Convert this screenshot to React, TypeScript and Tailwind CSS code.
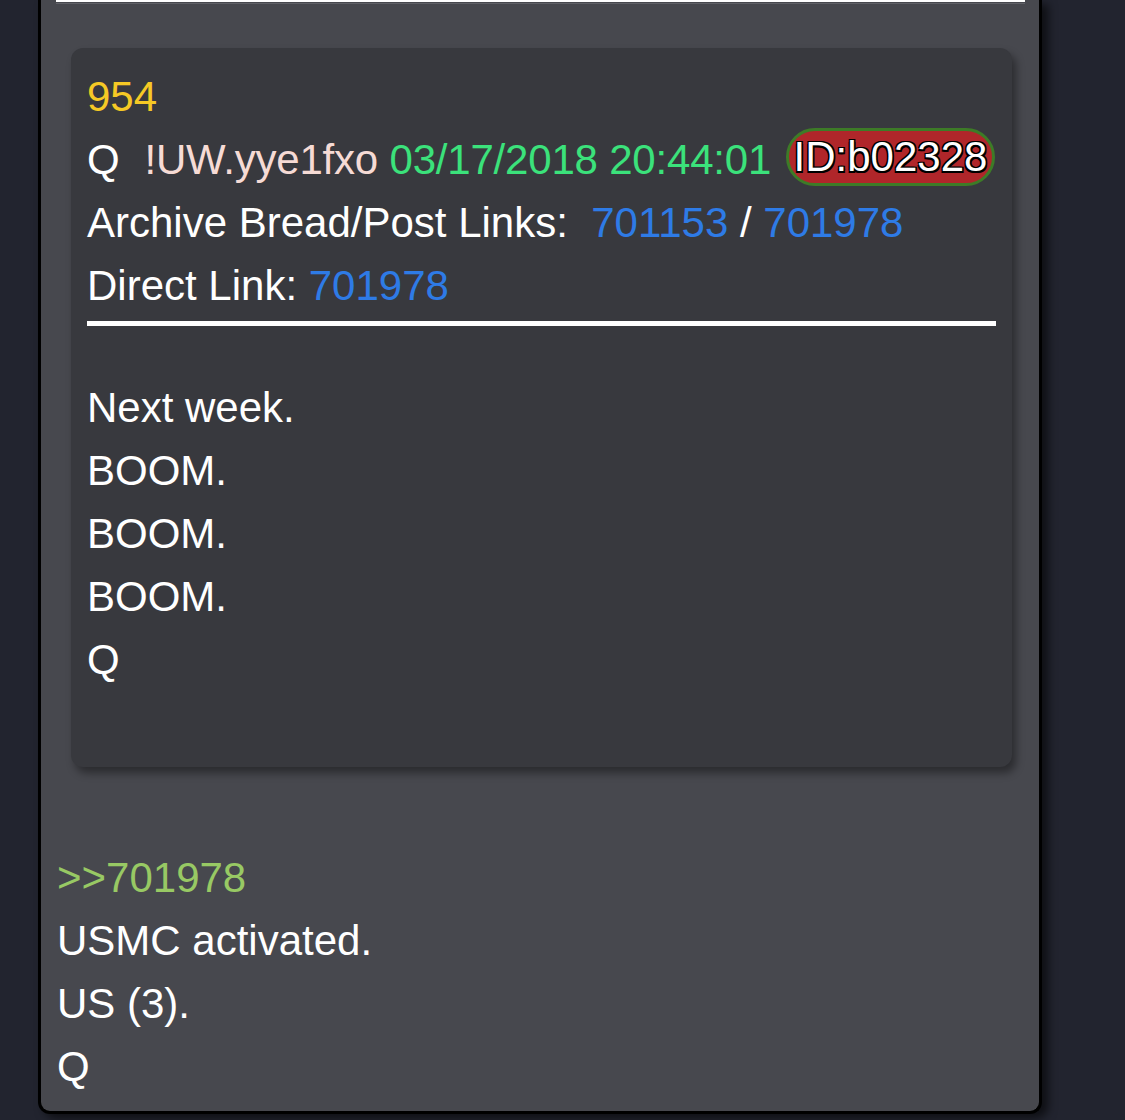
import React from 'react';

const font = "font-['Liberation_Sans',Arial,sans-serif]";

const Badge: React.FC<{ id: string }> = ({ id }) => (
    <span className="relative -top-[3px] inline-block align-middle -mt-[6px] ml-[3px] rounded-full border-[3px] border-[#3d7b27] bg-[#b0262a] px-[5px] leading-[52px] tracking-normal text-white [text-shadow:-1.5px_-1.5px_0_#000,1.5px_-1.5px_0_#000,-1.5px_1.5px_0_#000,1.5px_1.5px_0_#000,0_1.5px_0_#000,0_-1.5px_0_#000]">
        {id}
    </span>
);

export default function App() {
    return (
        <div className={`min-h-[1120px] w-[1125px] overflow-hidden bg-[#22242f] ${font}`}>
            <div className="ml-[38px] w-[1004px] rounded-b-[12px] border-x-[3px] border-b-[3px] border-black bg-[#47484e] pb-[13px] text-[42px] leading-[63px] text-white shadow-[6px_4px_10px_rgba(0,0,0,0.6)]">
                {/* tail of previous divider */}
                <div className="ml-[15px] mr-[14px] h-[2px] bg-white" />
                <div className="ml-[15px] mr-[14px] mt-[1px] h-[1px] bg-[#606167]" />

                {/* quoted post card */}
                <div className="ml-[30px] mr-[27px] mt-[44px] rounded-[12px] bg-[#38393e] px-[16px] pt-[17px] pb-[76px] shadow-[4px_6px_8px_rgba(0,0,0,0.4)]">
                    <div className="text-[#f6c925]">954</div>
                    <div className="whitespace-nowrap tracking-[-0.2px]">
                        <span>Q</span>
                        <span className="ml-[25px] text-[#f6dbd5]">!UW.yye1fxo</span>{' '}
                        <span className="text-[#3be27b]">03/17/2018 20:44:01</span>{' '}
                        <Badge id="ID:b02328" />
                    </div>
                    <div>
                        Archive Bread/Post Links:{'\u00a0 '}
                        <span className="text-[#2e7be6]">701153</span> /{' '}
                        <span className="text-[#2e7be6]">701978</span>
                    </div>
                    <div>
                        Direct Link: <span className="text-[#2e7be6]">701978</span>
                    </div>
                    <div className="mt-[4px] h-[5px] bg-white" />
                    <div className="mt-[50px]">
                        <div>Next week.</div>
                        <div>BOOM.</div>
                        <div>BOOM.</div>
                        <div>BOOM.</div>
                        <div>Q</div>
                    </div>
                </div>

                {/* reply */}
                <div className="mt-[79px] pl-[16px]">
                    <div className="text-[#98c964]">&gt;&gt;701978</div>
                    <div>USMC activated.</div>
                    <div>US (3).</div>
                    <div>Q</div>
                </div>
            </div>
        </div>
    );
}
